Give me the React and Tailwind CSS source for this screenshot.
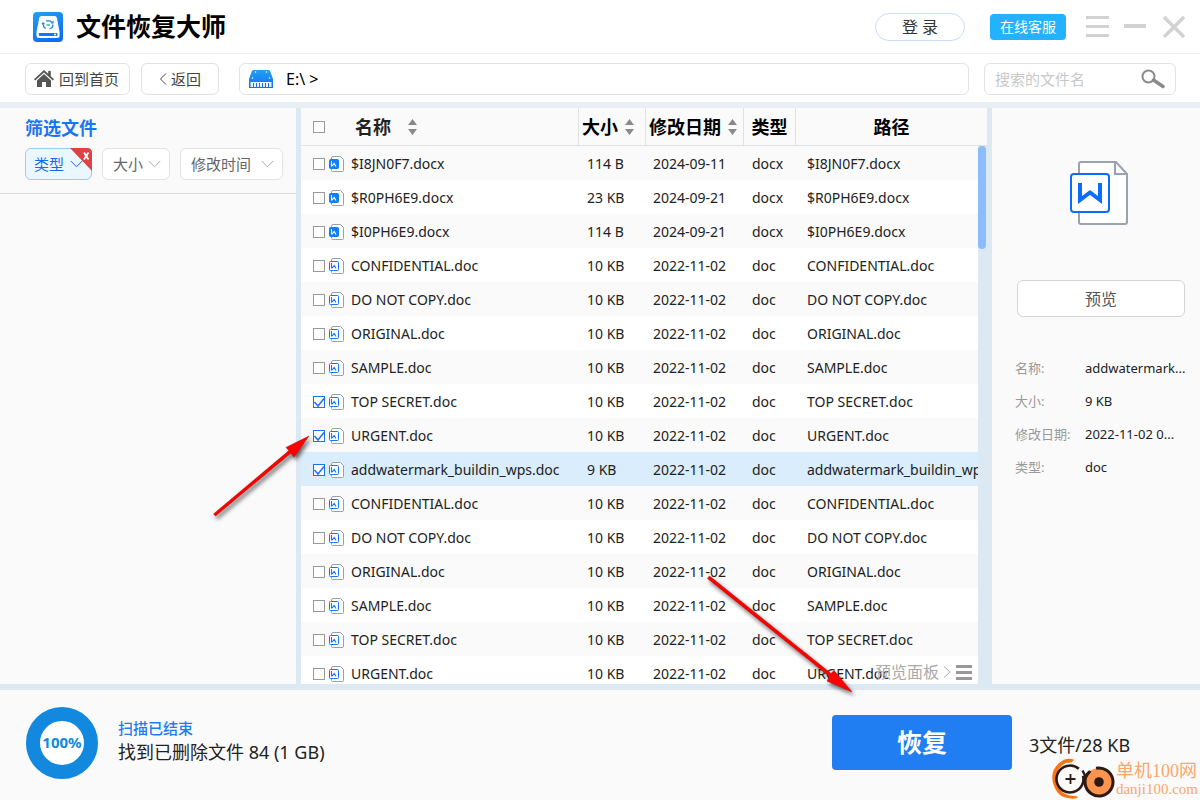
import React, { useState } from "react";

const files = [
  { name: "$I8JN0F7.docx", size: "114 B", date: "2024-09-11", type: "docx" },
  { name: "$R0PH6E9.docx", size: "23 KB", date: "2024-09-21", type: "docx" },
  { name: "$I0PH6E9.docx", size: "114 B", date: "2024-09-21", type: "docx" },
  { name: "CONFIDENTIAL.doc", size: "10 KB", date: "2022-11-02", type: "doc" },
  { name: "DO NOT COPY.doc", size: "10 KB", date: "2022-11-02", type: "doc" },
  { name: "ORIGINAL.doc", size: "10 KB", date: "2022-11-02", type: "doc" },
  { name: "SAMPLE.doc", size: "10 KB", date: "2022-11-02", type: "doc" },
  { name: "TOP SECRET.doc", size: "10 KB", date: "2022-11-02", type: "doc" },
  { name: "URGENT.doc", size: "10 KB", date: "2022-11-02", type: "doc" },
  { name: "addwatermark_buildin_wps.doc", size: "9 KB", date: "2022-11-02", type: "doc" },
  { name: "CONFIDENTIAL.doc", size: "10 KB", date: "2022-11-02", type: "doc" },
  { name: "DO NOT COPY.doc", size: "10 KB", date: "2022-11-02", type: "doc" },
  { name: "ORIGINAL.doc", size: "10 KB", date: "2022-11-02", type: "doc" },
  { name: "SAMPLE.doc", size: "10 KB", date: "2022-11-02", type: "doc" },
  { name: "TOP SECRET.doc", size: "10 KB", date: "2022-11-02", type: "doc" },
  { name: "URGENT.doc", size: "10 KB", date: "2022-11-02", type: "doc" },
];

const details = [
  { label: "名称:", value: "addwatermark..." },
  { label: "大小:", value: "9 KB" },
  { label: "修改日期:", value: "2022-11-02 0..." },
  { label: "类型:", value: "doc" },
];

const Logo = () => (
  <svg className="w-[30px] h-[30px] shrink-0" viewBox="0 0 30 30">
    <defs>
      <linearGradient id="logoBg" x1="0" y1="0" x2="0.4" y2="1">
        <stop offset="0" stopColor="#22a2ea" />
        <stop offset="1" stopColor="#0f6dfb" />
      </linearGradient>
    </defs>
    <rect width="30" height="30" rx="4" fill="url(#logoBg)" />
    <path
      d="M8.500 4h13q2 0 2.400 2L26.600 20v3.500q0 2.500-2.500 2.500H6q-2.500 0-2.500-2.500V20L6.200 6Q6.600 4 8.500 4Z"
      fill="#fff"
    />
    <path d="M5.800 21h18.500v3H7q-1.200 0-1.200-1.200Z" fill="#1476f3" />
    <circle cx="22" cy="22.500" r="1" fill="#fff" />
    <path d="M13 8.800h4l2.500 2.200M10 11.500l.8 3.500 2 1.600M20 12.500l-.8 3-2.700 1.500" fill="none" stroke="#1c82ef" strokeWidth="1.300" />
    <path d="M8.800 12.200 10 10.800l1.500 1.400M18.500 11.200l1.600-.3v-1.900" fill="none" stroke="#1c82ef" strokeWidth="1.100" />
    <path d="M13.500 13h3.500" stroke="#35c7a5" strokeWidth="1.600" />
  </svg>
);

const HomeIcon = () => (
  <svg className="w-5 h-[18px] shrink-0" viewBox="0 0 20 18" fill="#555">
    <path d="M10 0 0 9.300l1.200 1.300L10 2.600l8.800 8 1.200-1.300-3.200-3V1h-2.600v2.800Z" />
    <path d="M10 4 3 10.400V17h5v-5h4v5h5v-6.600Z" />
  </svg>
);

const DiskIcon = () => (
  <svg className="w-6 h-[18px] shrink-0" viewBox="0 0 24 18">
    <defs>
      <linearGradient id="diskBg" x1="0" y1="0" x2="0" y2="1">
        <stop offset="0" stopColor="#22a0ee" />
        <stop offset="1" stopColor="#1270f8" />
      </linearGradient>
    </defs>
    <path d="M4.500 0h15q1.200 0 1.600 1L24 9v9H0V9L2.900 1Q3.300 0 4.500 0Z" fill="url(#diskBg)" />
    <path d="M1.500 12h21v5h-21Z" fill="#e8f3ff" />
    <path d="M4.500 13v4M7.500 13v4M10.500 13v4M13.500 13v4M16.500 13v4M19.500 13v4" stroke="#1673f5" />
    <g fill="#fff">
      <circle cx="6.500" cy="2" r=".8" />
      <circle cx="17.500" cy="2" r=".8" />
      <circle cx="3.500" cy="8" r=".8" />
      <circle cx="20.500" cy="8" r=".8" />
    </g>
  </svg>
);

const Chevron = ({ className }) => (
  <svg className={className} viewBox="0 0 13 8" fill="none" stroke="currentColor">
    <path d="M.8 1 6.500 6.800 12.200 1" />
  </svg>
);

const SortIcon = () => (
  <svg className="w-[9px] h-4 shrink-0" viewBox="0 0 9 16" fill="#8a8a8a">
    <path d="M4.500 0 9 6H0ZM4.500 16 9 10H0Z" />
  </svg>
);

const FileIcon = ({ filled }) => (
  <svg className="block w-[15px] h-4" viewBox="0 0 15 16">
    <path
      d="M4 .5h7.500l3 3v11q0 1-1 1h-10q-1 0-1-1V2q0-1.500 1.500-1.500Z"
      fill="#fff"
      stroke="#98a0ad"
    />
    <rect x=".5" y="3.500" width="9" height="9" rx="1" fill={filled ? "#1080f8" : "#fff"} stroke={filled ? "#1080f8" : "#1673ff"} />
    <path d="M2.500 5v5.500M3 10.200 5.200 7.500 7 10.500" fill="none" stroke={filled ? "#fff" : "#1673ff"} strokeWidth="1.100" />
  </svg>
);

const DocIcon = () => (
  <svg className="w-[58px] h-16" viewBox="0 0 58 64" fill="none">
    <path d="M11 1h35l11 12v48q0 2-2 2H11q-2 0-2-2V3q0-2 2-2Z" fill="#fff" stroke="#9aa1af" strokeWidth="2" />
    <path d="M45 1v12h12" stroke="#9aa1af" strokeWidth="2" />
    <rect x="1" y="13" width="38" height="38" rx="3" fill="#fff" stroke="#0a6cff" strokeWidth="2" />
    <path d="M10 22v17L20 31.500 30 39V22" stroke="#0a6cff" strokeWidth="4" />
  </svg>
);

const CheckBox = ({ label, checked, onChange }) => (
  <span className="relative w-3 h-3 shrink-0">
    <input
      type="checkbox"
      aria-label={label}
      checked={checked}
      onChange={onChange}
      className="peer block appearance-none w-3 h-3 bg-white border border-[#999] checked:border-[#1a73f0]"
    />
    <svg
      className="hidden peer-checked:block absolute inset-0 w-3 h-3 pointer-events-none"
      viewBox="0 0 12 12"
      fill="none"
      stroke="#1a73f0"
      strokeWidth="1.500"
    >
      <path d="M1.500 6 5 10 11 2.500" />
    </svg>
  </span>
);

const FilterSelect = ({ label, active, className }) => (
  <div className={`relative h-8 ${className}`}>
    <select
      aria-label={label}
      className={`appearance-none block w-full h-full rounded-md border text-[15px] outline-none ${
        active
          ? "pl-2 bg-[#ebf7ff] border-[#9cc9f5] text-[#0f6cf5]"
          : "pl-[10px] bg-white border-[#e2e2e2] text-[#666]"
      }`}
    >
      <option>{label}</option>
    </select>
    <Chevron
      className={`absolute right-[9px] top-3 w-[13px] h-2 pointer-events-none ${
        active ? "text-[#0f6cf5]" : "text-[#aaa]"
      }`}
    />
    {active && (
      <button type="button" aria-label="清除" className="absolute top-0 right-0">
        <svg className="w-[22px] h-[23px]" viewBox="0 0 22 23">
          <path d="M0 0h17q5 0 5 5v18Z" fill="#dd4246" />
          <path d="M14 4.500l4.500 7M18.500 4.500l-4.500 7" stroke="#fff" strokeWidth="1.800" />
        </svg>
      </button>
    )}
  </div>
);

const Header = () => (
  <header className="flex items-center h-[54px] shrink-0 pl-[33px] pr-[15px] bg-white border-b border-[#ececec]">
    <Logo />
    <h1 className="ml-[13px] text-[25px] font-bold text-black">文件恢复大师</h1>
    <button
      type="button"
      className="ml-auto w-[90px] h-7 rounded-full border border-[#c9dff8] bg-white text-base leading-6 text-[#333]"
    >
      登 录
    </button>
    <button type="button" className="ml-[25px] w-[76px] h-[26px] rounded bg-[#22b2ff] text-sm text-white">
      在线客服
    </button>
    <button type="button" aria-label="菜单" className="ml-5">
      <svg className="w-[23px] h-[22px]" viewBox="0 0 23 22" fill="#d2d2d2">
        <path d="M0 0h23v3H0ZM0 9h23v3H0ZM0 18h23v3H0Z" />
      </svg>
    </button>
    <button type="button" aria-label="最小化" className="ml-[15px]">
      <svg className="w-[22px] h-[22px]" viewBox="0 0 22 22" fill="#d2d2d2">
        <path d="M0 8h22v4H0Z" />
      </svg>
    </button>
    <button type="button" aria-label="关闭" className="ml-[17px]">
      <svg className="w-[22px] h-[22px]" viewBox="0 0 22 22" stroke="#d2d2d2" strokeWidth="3.500">
        <path d="M1 1l20 20M21 1 1 21" />
      </svg>
    </button>
  </header>
);

const Toolbar = () => (
  <div className="flex items-center h-12 shrink-0 pt-[2px] pl-[25px] pr-6 bg-white text-[15px] text-[#444]">
    <button
      type="button"
      className="flex items-center gap-[5px] w-[105px] h-8 pl-2 rounded-md border border-[#e2e2e2]"
    >
      <HomeIcon />
      回到首页
    </button>
    <button
      type="button"
      className="flex items-center justify-center gap-1 ml-[11px] w-[78px] h-8 rounded-md border border-[#e2e2e2]"
    >
      <svg className="w-2 h-3" viewBox="0 0 8 12" fill="none" stroke="#444">
        <path d="M7 .5 1.500 6 7 11.500" />
      </svg>
      返回
    </button>
    <div className="flex items-center flex-1 ml-5 h-8 pl-[9px] rounded-md border border-[#e2e2e2] text-base text-black">
      <DiskIcon />
      <span className="ml-[13px]">E:\ &gt;</span>
    </div>
    <div className="flex items-center ml-[15px] w-48 h-8 px-[10px] rounded-md border border-[#e2e2e2]">
      <input
        type="text"
        aria-label="搜索"
        placeholder="搜索的文件名"
        className="flex-1 min-w-0 bg-transparent outline-none placeholder:text-[#c8c8c8]"
      />
      <button type="button" aria-label="开始搜索">
        <svg className="w-6 h-5" viewBox="0 0 24 20" fill="none" stroke="#8a8a8a">
          <circle cx="7.500" cy="7.500" r="6" strokeWidth="2" />
          <path d="M12.500 11 22 17.500" strokeWidth="3.400" strokeLinecap="round" />
        </svg>
      </button>
    </div>
  </div>
);

const FileTable = () => {
  const [checked, setChecked] = useState([7, 8, 9]);
  const selected = 9;

  const toggle = (i) => {
    setChecked(checked.includes(i) ? checked.filter((c) => c !== i) : [...checked, i]);
  };
  const toggleAll = () => {
    setChecked(checked.length === files.length ? [] : files.map((_, i) => i));
  };

  return (
    <section className="relative flex-1 min-w-0 overflow-hidden bg-white">
      <table className="w-full table-fixed border-separate border-spacing-0 text-[#222]">
        <colgroup>
          <col />
          <col className="w-[67px]" />
          <col className="w-[98px]" />
          <col className="w-[52px]" />
          <col className="w-[192px]" />
        </colgroup>
        <thead className="bg-[#fafafa] text-lg text-black">
          <tr className="h-[38px]">
            <th className="p-0 border-b border-[#dfe1e3]">
              <div className="flex items-center pl-3">
                <CheckBox label="全选" checked={checked.length === files.length} onChange={toggleAll} />
                <span className="ml-[30px] mr-[17px] leading-6 text-[#222]">名称</span>
                <SortIcon />
              </div>
            </th>
            <th className="p-0 border-b border-l border-[#dfe1e3]">
              <div className="flex items-center gap-[7px] pl-[3px] leading-6">
                大小
                <SortIcon />
              </div>
            </th>
            <th className="p-0 border-b border-l border-[#dfe1e3]">
              <div className="flex items-center gap-[7px] pl-[3px] leading-6 whitespace-nowrap">
                修改日期
                <SortIcon />
              </div>
            </th>
            <th className="p-0 border-b border-l border-[#dfe1e3] leading-6">类型</th>
            <th className="p-0 border-b border-l border-[#dfe1e3] leading-6">路径</th>
          </tr>
        </thead>
        <tbody className="text-sm leading-5 whitespace-nowrap">
          {files.map((file, i) => (
            <tr
              key={i}
              className={`h-[34px] ${i === selected ? "bg-[#d9edfd]" : i % 2 === 0 ? "bg-[#fafafa]" : "bg-white"}`}
            >
              <td className="p-0 pt-[2px]">
                <div className="flex items-center pl-3">
                  <div className="flex items-center gap-1 mr-[7px]">
                    <CheckBox label={file.name} checked={checked.includes(i)} onChange={() => toggle(i)} />
                    <FileIcon filled={file.type === "docx"} />
                  </div>
                  {file.name}
                </div>
              </td>
              <td className="p-0 pt-[2px] pl-[9px]">{file.size}</td>
              <td className="p-0 pt-[2px] pl-2">{file.date}</td>
              <td className="p-0 pt-[2px] pl-[9px]">{file.type}</td>
              <td className="p-0 pt-[2px] pl-3 overflow-hidden">{file.name}</td>
            </tr>
          ))}
        </tbody>
      </table>

      {/* Scrollbar */}
      <div className="absolute top-[38px] right-0 bottom-0 w-[9px] bg-[#dce9f3]">
        <div className="w-2 h-[103px] rounded-full bg-[#8bbcfd]"></div>
      </div>

      <button
        type="button"
        className="absolute right-[15px] bottom-0 flex items-center h-6 text-base leading-6 text-[#aaa]"
      >
        预览面板
        <svg className="ml-1 mr-[5px] w-2 h-3" viewBox="0 0 8 12" fill="none" stroke="#aaa">
          <path d="M1 .5 7 6 1 11.500" />
        </svg>
        <svg className="w-4 h-[15px]" viewBox="0 0 16 15" fill="#999">
          <path d="M0 0h16v3H0ZM0 6h16v3H0ZM0 12h16v3H0Z" />
        </svg>
      </button>
    </section>
  );
};

const PreviewPanel = () => (
  <aside className="w-52 shrink-0 pl-[25px] pr-[15px] pt-[53px] bg-[#fafafa]">
    <div className="flex justify-center pr-1">
      <DocIcon />
    </div>
    <button
      type="button"
      className="block mt-[55px] w-full h-[37px] rounded-md border border-[#d4d4d4] bg-white text-base text-[#555]"
    >
      预览
    </button>
    <dl className="grid grid-cols-[70px_1fr] gap-y-[13px] -ml-[2px] mt-[41px] text-[13px] leading-5 whitespace-nowrap">
      {details.map((item) => (
        <React.Fragment key={item.label}>
          <dt className="text-[#999]">{item.label}</dt>
          <dd className="text-[#222]">{item.value}</dd>
        </React.Fragment>
      ))}
    </dl>
  </aside>
);

const Watermark = () => (
  <div className="absolute right-[2px] bottom-0 flex items-center text-[#f9a66c]">
    <svg className="w-16 h-[42px]" viewBox="0 0 64 42" fill="none">
      <path d="M22 1.500Q14-1 7 5-2 13 1 25q4 14 15 15 9 2 10-1.500l-8-1Q6 35 4.500 22 4 9 14 5q7 0 8-3.500Z" fill="#fa7414" />
      <circle
        cx="18"
        cy="21"
        r="13.500"
        fill="#fdfbf8"
        stroke="#2b1a16"
        strokeWidth="2.600"
        strokeDasharray="76 9"
        transform="rotate(-14 18 21)"
      />
      <path d="M13.500 21h10M18.500 16v10" stroke="#2b1a16" strokeWidth="1.800" />
      <circle cx="47" cy="24" r="14" fill="#fd944d" />
      <circle
        cx="47"
        cy="24"
        r="14"
        stroke="#2b1a16"
        strokeWidth="3"
        strokeDasharray="80 8"
        transform="rotate(-102 47 24)"
      />
      <path d="M30.500 12.500l3 6 5-5.500" stroke="#2b1a16" strokeWidth="2.400" />
      <circle cx="47" cy="24" r="4.800" fill="#2b1a16" />
    </svg>
    <div className="font-['Liberation_Serif','Noto_Sans_CJK_SC',serif]">
      <p className="text-lg leading-5">单机100网</p>
      <p className="text-[15px] leading-4">danji100.com</p>
    </div>
  </div>
);

const Footer = () => (
  <footer className="relative flex items-center h-[110px] shrink-0 pl-[26px] pr-[68px] pb-[5px] bg-[#fafafa]">
    <div className="flex items-center justify-center w-[72px] h-[72px] rounded-full border-14 border-[#1288de] bg-white text-[15px] font-bold text-[#1288de]">
      100%
    </div>
    <div className="ml-5 pb-[6px] text-[#222]">
      <p className="text-[15px] leading-6 font-medium text-[#1f7cf2]">扫描已结束</p>
      <p className="text-lg leading-6">找到已删除文件 84 (1 GB)</p>
    </div>
    <button type="button" className="ml-auto w-[180px] h-[55px] rounded bg-[#207df2] text-[25px] font-bold text-white">
      恢复
    </button>
    <p className="ml-[17px] min-w-[103px] pt-1 text-lg text-[#222]">3文件/28 KB</p>
    <Watermark />
  </footer>
);

// Red pointer arrows drawn on top of the window
const Arrows = () => (
  <svg className="absolute inset-0 w-full h-full pointer-events-none" viewBox="0 0 1200 800">
    <defs>
      <filter id="arrowShadow" x="-20%" y="-20%" width="140%" height="140%">
        <feDropShadow dx="2" dy="3" stdDeviation="2" floodColor="#000" floodOpacity="0.6" />
      </filter>
    </defs>
    <g fill="#f00" stroke="#a01010" strokeWidth=".5" filter="url(#arrowShadow)">
      <path d="M213.500 514 289 450.500 286 447.500 309 436 294 457 291 453 215.500 516Z" />
      <path d="M707.500 578.500 709.500 576 831 673.500 834 670.500 852 692 827 681 829.500 676.500Z" />
    </g>
  </svg>
);

const App = () => {
  return (
    <div className="relative flex flex-col h-screen overflow-hidden bg-[#fafafa] font-['Noto_Sans','Noto_Sans_CJK_SC',sans-serif]">
      <Header />
      <Toolbar />
      <main className="flex flex-1 min-h-0 border-t-6 border-b-6 border-t-[#e8f0f6] border-b-[#dce9f3]">
        <aside className="w-[301px] shrink-0 border-r-5 border-[#dce9f3]">
          <div className="pl-[25px] pt-2 pb-[13px] border-b border-[#dedede]">
            <h2 className="mb-2 text-lg leading-6 font-bold text-[#1a75f5]">筛选文件</h2>
            <div className="flex gap-[10px]">
              <FilterSelect label="类型" active className="w-[67px]" />
              <FilterSelect label="大小" className="w-[68px]" />
              <FilterSelect label="修改时间" className="w-[103px]" />
            </div>
          </div>
        </aside>
        <FileTable />
        <div className="w-[5px] shrink-0 bg-[#dce9f3]"></div>
        <PreviewPanel />
      </main>
      <Footer />
      <Arrows />
    </div>
  );
};

export default App;
